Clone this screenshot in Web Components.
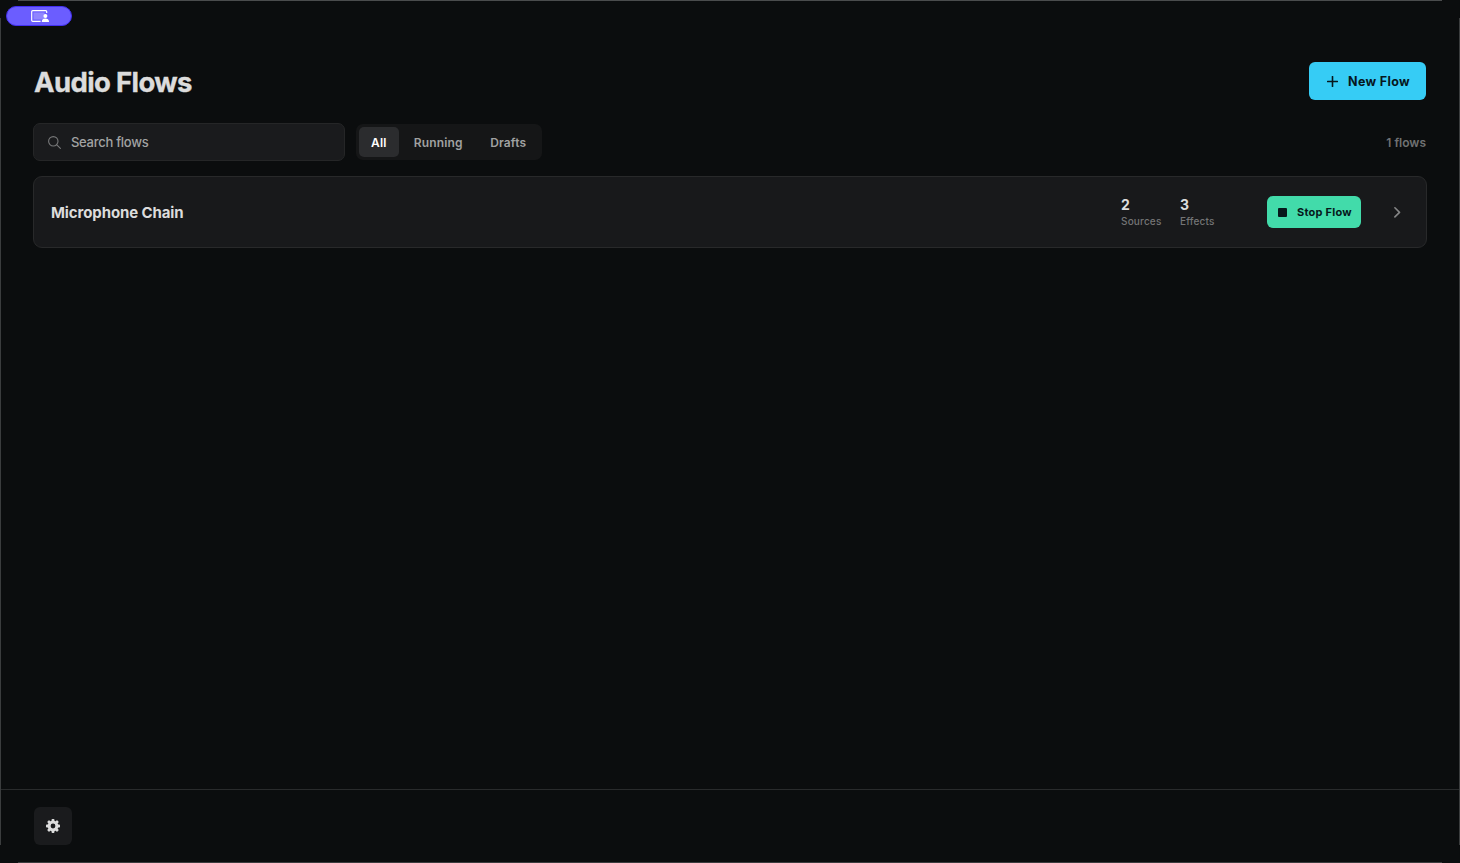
<!DOCTYPE html>
<html lang="en">
<head>
<meta charset="utf-8">
<title>Audio Flows</title>
<style>
  body {
    margin: 0;
    background: #0b0d0e;
    color: #dcdcdc;
    font-family: Inter, 'Liberation Sans', sans-serif;
  }
</style>
</head>
<body>
<app-window>
  <share-badge slot="badge"></share-badge>
  <page-header>
    Audio Flows
    <new-button slot="action">New Flow</new-button>
  </page-header>
  <flow-toolbar>
    <search-field>Search flows</search-field>
    <filter-tabs>
      <filter-tab active>All</filter-tab>
      <filter-tab>Running</filter-tab>
      <filter-tab>Drafts</filter-tab>
    </filter-tabs>
    <span slot="count">1 flows</span>
  </flow-toolbar>
  <flow-row>
    Microphone Chain
    <flow-stat slot="stats" value="2">Sources</flow-stat>
    <flow-stat slot="stats" value="3">Effects</flow-stat>
    <stop-button slot="action">Stop Flow</stop-button>
  </flow-row>
  <settings-button slot="footer"></settings-button>
</app-window>

<script>
const define = (name, html, setup) => {
  const template = document.createElement('template');
  template.innerHTML = html;
  window.customElements.define(name, class extends HTMLElement {
    constructor() {
      super();
      this.attachShadow({ mode: 'open' });
      this.shadowRoot.appendChild(template.content.cloneNode(true));
      if (setup) setup(this);
    }
  });
};

define('app-window', `
  <style>
    :host {
      position: relative;
      display: flex;
      flex-direction: column;
      height: 863px;
      overflow: hidden;
    }
    main { flex: 1; padding: 62px 34px 0; }
    footer {
      box-sizing: border-box;
      height: 74px;
      padding: 17px 34px;
      border-top: 1px solid #292b2c;
    }
    .badge { position: absolute; left: 6px; top: 6px; }
    .edge { position: absolute; background: #4a4c4d; }
    .top { left: 18px; right: 18px; top: 0; height: 1px; }
    .bottom { left: 18px; right: 18px; bottom: 0; height: 1px; background: #3b3d3e; }
    .left { left: 0; top: 18px; bottom: 18px; width: 1px; background: #3b3d3e; }
    .right { right: 0; top: 18px; bottom: 18px; width: 1px; background: #3b3d3e; }
  </style>
  <main><slot></slot></main>
  <footer><slot name="footer"></slot></footer>
  <div class="badge"><slot name="badge"></slot></div>
  <div class="edge top"></div>
  <div class="edge bottom"></div>
  <div class="edge left"></div>
  <div class="edge right"></div>
`);

define('share-badge', `
  <style>
    :host {
      box-sizing: border-box;
      display: flex;
      justify-content: center;
      align-items: center;
      width: 66px;
      height: 20px;
      padding-left: 2px;
      border: 1px solid #432ff2;
      border-radius: 10px;
      background: #6b5dff;
    }
    svg { display: block; }
  </style>
  <svg width="18" height="12" viewBox="0 0 18 12">
    <rect x="2.5" y="2.5" width="11" height="7" fill="#9085ff"/>
    <path d="M9.6 11.3H1.7a1 1 0 0 1-1-1V1.7a1 1 0 0 1 1-1h13a1 1 0 0 1 1 1v1.4" fill="none" stroke="#fff" stroke-width="1.2"/>
    <circle cx="14.4" cy="5.9" r="2" fill="#fff"/>
    <path d="M10.8 12v-.6c0-1.6 1.6-2.8 3.6-2.8s3.6 1.2 3.6 2.8v.6z" fill="#fff"/>
  </svg>
`);

define('page-header', `
  <style>
    :host { display: flex; justify-content: space-between; align-items: center; height: 38px; }
    h1 {
      margin: 2px 0 0;
      font-size: 27.5px;
      line-height: 38px;
      font-weight: 700;
      letter-spacing: -0.62px;
      -webkit-text-stroke: 0.4px;
    }
  </style>
  <h1><slot></slot></h1>
  <slot name="action"></slot>
`);

define('new-button', `
  <style>
    :host {
      box-sizing: border-box;
      display: flex;
      align-items: center;
      gap: 10px;
      width: 117px;
      height: 38px;
      padding: 1px 0 0 18px;
      border-radius: 6px;
      background: #36ccf5;
      color: #06171d;
      font-size: 12.5px;
      font-weight: 700;
      letter-spacing: 0.35px;
      white-space: nowrap;
    }
  </style>
  <svg width="11" height="11" viewBox="0 0 11 11">
    <path d="M5.5 .6v9.8M.6 5.5h9.8" stroke="currentColor" stroke-width="1.6" stroke-linecap="round"/>
  </svg>
  <span><slot></slot></span>
`);

define('flow-toolbar', `
  <style>
    :host { display: flex; align-items: center; gap: 12px; height: 36px; margin: 24px 0 16px; }
    .count {
      margin-left: auto;
      color: #707172;
      font-size: 12px;
      font-weight: 600;
    }
  </style>
  <slot></slot>
  <div class="count"><slot name="count"></slot></div>
`);

define('search-field', `
  <style>
    :host {
      box-sizing: border-box;
      display: flex;
      align-items: center;
      gap: 10px;
      width: 312px;
      height: 38px;
      margin-left: -1px;
      padding-left: 14px;
      border: 1px solid #252627;
      border-radius: 7px;
      background: #1a1b1d;
      color: #a2a3a3;
      font-size: 13px;
      letter-spacing: -0.28px;
      font-weight: 500;
    }
  </style>
  <svg width="13" height="13" viewBox="0 0 13 13" fill="none" stroke="#777879" stroke-width="1.1" stroke-linecap="round">
    <circle cx="5.3" cy="5.3" r="4.7"/>
    <path d="M8.8 8.8l3.6 3.6"/>
  </svg>
  <span><slot></slot></span>
`);

define('filter-tabs', `
  <style>
    :host {
      box-sizing: border-box;
      display: flex;
      gap: 3px;
      width: 186px;
      height: 36px;
      margin-left: -1px;
      padding: 3px;
      border-radius: 7px;
      background: #151617;
    }
  </style>
  <slot></slot>
`);

define('filter-tab', `
  <style>
    :host {
      display: flex;
      align-items: center;
      padding: 0 12.4px 0 12px;
      border-radius: 5px;
      color: #a0a1a1;
      font-size: 12px;
      font-weight: 600;
      letter-spacing: 0.15px;
    }
    :host([active]) { background: #2b2c2e; color: #fff; }
  </style>
  <span><slot></slot></span>
`);

define('flow-row', `
  <style>
    :host {
      box-sizing: border-box;
      display: flex;
      align-items: center;
      height: 72px;
      margin: 0 -1px;
      padding: 0 25px 0 17px;
      border: 1px solid #28292a;
      border-radius: 9px;
      background: #18191b;
    }
    .name { flex: 1; font-size: 15px; font-weight: 700; letter-spacing: -0.1px; }
    .stats { display: flex; width: 146px; }
    svg { margin-left: 32px; }
  </style>
  <div class="name"><slot></slot></div>
  <div class="stats"><slot name="stats"></slot></div>
  <slot name="action"></slot>
  <svg width="8" height="12" viewBox="0 0 8 12">
    <path d="M1.9 1.8L6.5 6.4l-4.6 4.5" fill="none" stroke="#858687" stroke-width="1.6" stroke-linecap="round" stroke-linejoin="round"/>
  </svg>
`);

define('flow-stat', `
  <style>
    :host { display: block; width: 59px; white-space: nowrap; }
    .value { padding-bottom: 1px; font-size: 14px; line-height: 17px; font-weight: 700; }
    .label { color: #747576; font-size: 10px; line-height: 15px; font-weight: 500; letter-spacing: 0.18px; }
  </style>
  <div class="value"></div>
  <div class="label"><slot></slot></div>
`, (el) => {
  el.shadowRoot.querySelector('.value').textContent = el.getAttribute('value');
});

define('stop-button', `
  <style>
    :host {
      box-sizing: border-box;
      display: flex;
      align-items: center;
      gap: 10px;
      width: 94px;
      height: 32px;
      padding-left: 11px;
      border-radius: 6px;
      background: #42dbaa;
      color: #06181b;
      font-size: 11px;
      font-weight: 700;
      letter-spacing: 0.22px;
      white-space: nowrap;
    }
    i { flex: none; width: 9px; height: 9px; border-radius: 1px; background: currentColor; }
  </style>
  <i></i>
  <span><slot></slot></span>
`);

define('settings-button', `
  <style>
    :host {
      display: flex;
      align-items: center;
      justify-content: center;
      width: 38px;
      height: 38px;
      border-radius: 6px;
      background: #1a1b1d;
    }
  </style>
  <svg width="14" height="14" viewBox="0 0 14 14" fill="#dcdcdc">
    <defs><rect id="tooth" x="5.6" y="0" width="2.8" height="4" rx=".7"/></defs>
    <circle cx="7" cy="7" r="3.9" fill="none" stroke="#dcdcdc" stroke-width="3"/>
    <use href="#tooth"/>
    <use href="#tooth" transform="rotate(45 7 7)"/>
    <use href="#tooth" transform="rotate(90 7 7)"/>
    <use href="#tooth" transform="rotate(135 7 7)"/>
    <use href="#tooth" transform="rotate(180 7 7)"/>
    <use href="#tooth" transform="rotate(225 7 7)"/>
    <use href="#tooth" transform="rotate(270 7 7)"/>
    <use href="#tooth" transform="rotate(315 7 7)"/>
  </svg>
`);
</script>
</body>
</html>
